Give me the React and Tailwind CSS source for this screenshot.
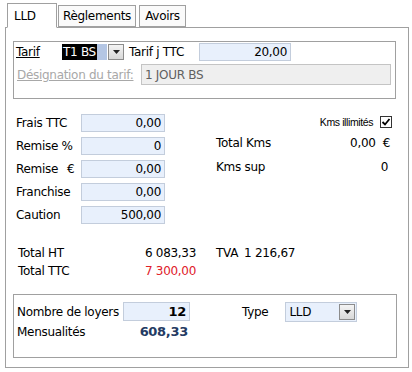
function Field({ value, w = "w-[84px]", bold = false, className = "" }) {
  return (
    <div
      className={`${w} h-[18px] border border-[#c3cddc] bg-[#e8f0fc] flex items-center justify-end pr-[3px] ${bold ? "font-bold" : ""} ${className}`}
    >
      {value}
    </div>
  );
}

function Arrow() {
  return (
    <div className="w-[16px] h-[16px] border border-[#8c8c8c] bg-gradient-to-b from-[#f4f4f4] to-[#d8d8d8] flex items-center justify-center">
      <svg width="7" height="4" viewBox="0 0 7 4">
        <path d="M0 0h7L3.5 4z" fill="#222" />
      </svg>
    </div>
  );
}

export default function App() {
  return (
    <div className="w-[412px] h-[372px] bg-white text-[12px] text-black font-['DejaVu_Sans',sans-serif] tracking-[-0.3px] leading-none">
      {/* tabs */}
      <div className="flex items-end pl-[7px] pt-[3px] relative z-10">
        <div className="w-[50px] h-[25px] border border-[#a0a0a0] border-b-white bg-white flex items-center pl-[6px] -mb-px">LLD</div>
        <div className="w-[78px] h-[22px] border border-[#a0a0a0] bg-[#fafafa] flex items-center justify-center ml-[1px]">Règlements</div>
        <div className="w-[47px] h-[22px] border border-[#a0a0a0] bg-[#fafafa] flex items-center justify-center ml-[3px]">Avoirs</div>
      </div>

      {/* panel */}
      <div className="ml-[5px] w-[404px] h-[341px] border border-[#a0a0a0] pl-[7px] pt-[13px]">
        {/* tarif group */}
        <div className="w-[383px] h-[58px] border border-[#a0a0a0] pl-[2px] pt-[1px]">
          <div className="flex items-center h-[18px]">
            <span className="w-[46px] underline">Tarif</span>
            <div className="flex items-center h-[16px]">
              <div className="w-[35px] h-[16px] bg-black text-white flex items-center pl-[1px]">T1 BS</div>
              <div className="w-[10px] h-[16px] bg-[#b4c6e4]" />
              <div className="ml-[1px]">
                <Arrow />
              </div>
            </div>
            <span className="ml-[5px] w-[70px]">Tarif j TTC</span>
            <Field value="20,00" w="w-[92px]" />
          </div>
          <div className="flex items-center mt-[3px]">
            <span className="w-[125px] pl-[1px] underline text-[#a8a8a8]">Désignation du tarif:</span>
            <div className="w-[250px] h-[21px] border border-[#c4c4c4] bg-[#efefef] text-[#606060] flex items-center pl-[3px]">1 JOUR BS</div>
          </div>
        </div>

        {/* middle */}
        <div className="flex mt-[15px] pl-[3px]">
          <div className="flex flex-col gap-[5px] w-[200px]">
            {[
              ["Frais TTC", "0,00"],
              ["Remise %", "0"],
              ["Remise", "0,00", true],
              ["Franchise", "0,00"],
              ["Caution", "500,00"],
            ].map(([l, v, euro]) => (
              <div key={l} className="flex items-center h-[18px]">
                <span className="w-[65px] flex">
                  {l}
                  {euro && <span className="ml-[9px]">€</span>}
                </span>
                <Field value={v} />
              </div>
            ))}
          </div>
          <div className="w-[176px]">
            <div className="flex items-center justify-end h-[14px] mt-[1px]">
              <span className="text-[10.5px] font-['Liberation_Sans_Narrow','Liberation_Sans',sans-serif] tracking-[-0.4px]">Kms illimités</span>
              <div className="ml-[7px] w-[12px] h-[12px] border border-[#333] flex items-center justify-center">
                <svg width="10" height="10" viewBox="0 0 10 10">
                  <path d="M1.5 5l2.5 2.5 4.5-5.5" stroke="#000" strokeWidth="1.8" fill="none" />
                </svg>
              </div>
            </div>
            <div className="flex justify-between mt-[8px] pr-[2px]">
              <span>Total Kms</span>
              <span>0,00&nbsp;&nbsp;€</span>
            </div>
            <div className="flex justify-between mt-[12px] pr-[4px]">
              <span>Kms sup</span>
              <span>0</span>
            </div>
          </div>
        </div>

        {/* totals */}
        <div className="flex mt-[23px] pl-[5px]">
          <div className="w-[178px] flex flex-col gap-[6px]">
            <div className="flex justify-between">
              <span>Total HT</span>
              <span>6 083,33</span>
            </div>
            <div className="flex justify-between">
              <span>Total TTC</span>
              <span className="text-[#e0202a]">7 300,00</span>
            </div>
          </div>
          <div className="ml-[20px] flex">
            <span>TVA</span>
            <span className="ml-[6px]">1 216,67</span>
          </div>
        </div>

        {/* bottom group */}
        <div className="mt-[17px] w-[384px] h-[64px] border border-[#a0a0a0] pl-[3px] pt-[7px]">
          <div className="flex items-center h-[19px]">
            <span className="w-[106px]">Nombre de loyers</span>
            <Field value="12" w="w-[67px]" bold className="h-[19px] text-[13px]" />
            <span className="ml-[52px] font-medium">Type</span>
            <div className="ml-[17px] w-[72px] h-[20px] border border-[#c3cddc] bg-[#e8f0fc] flex items-center justify-between pl-[3px] pr-[1px]">
              <span>LLD</span>
              <Arrow />
            </div>
          </div>
          <div className="flex items-center mt-[4px]">
            <span className="w-[106px]">Mensualités</span>
            <span className="w-[67px] text-right pr-[2px] font-bold text-[#243b63] text-[13px]">608,33</span>
          </div>
        </div>
      </div>
    </div>
  );
}
